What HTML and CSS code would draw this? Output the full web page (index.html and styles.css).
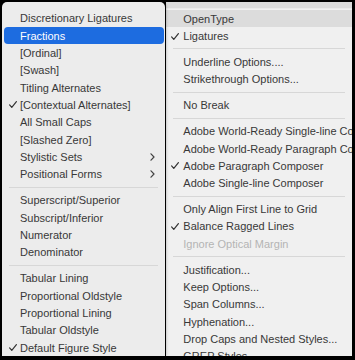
FILE: index.html
```html
<!DOCTYPE html>
<html>
<head>
<meta charset="utf-8">
<link rel="stylesheet" href="styles.css">
</head>
<body>
<div class="frame">
  <div class="menus">
    <div class="menu sub">
      <div class="item"><span class="chk"></span><span class="label">Discretionary Ligatures</span></div>
      <div class="item sel"><span class="chk"></span><span class="label">Fractions</span></div>
      <div class="item"><span class="chk"></span><span class="label">[Ordinal]</span></div>
      <div class="item"><span class="chk"></span><span class="label">[Swash]</span></div>
      <div class="item"><span class="chk"></span><span class="label">Titling Alternates</span></div>
      <div class="item"><span class="chk"><svg class="tick" viewBox="0 0 8 7"><path d="M0.6 3.9 L2.8 6.3 L7.4 0.6"/></svg></span><span class="label">[Contextual Alternates]</span></div>
      <div class="item"><span class="chk"></span><span class="label">All Small Caps</span></div>
      <div class="item"><span class="chk"></span><span class="label">[Slashed Zero]</span></div>
      <div class="item"><span class="chk"></span><span class="label">Stylistic Sets</span><svg class="arrow" viewBox="0 0 5 8"><path d="M1 0.8 L4 4 L1 7.2"/></svg></div>
      <div class="item"><span class="chk"></span><span class="label">Positional Forms</span><svg class="arrow" viewBox="0 0 5 8"><path d="M1 0.8 L4 4 L1 7.2"/></svg></div>
      <div class="sep"></div>
      <div class="item"><span class="chk"></span><span class="label">Superscript/Superior</span></div>
      <div class="item"><span class="chk"></span><span class="label">Subscript/Inferior</span></div>
      <div class="item"><span class="chk"></span><span class="label">Numerator</span></div>
      <div class="item"><span class="chk"></span><span class="label">Denominator</span></div>
      <div class="sep"></div>
      <div class="item"><span class="chk"></span><span class="label">Tabular Lining</span></div>
      <div class="item"><span class="chk"></span><span class="label">Proportional Oldstyle</span></div>
      <div class="item"><span class="chk"></span><span class="label">Proportional Lining</span></div>
      <div class="item"><span class="chk"></span><span class="label">Tabular Oldstyle</span></div>
      <div class="item"><span class="chk"><svg class="tick" viewBox="0 0 8 7"><path d="M0.6 3.9 L2.8 6.3 L7.4 0.6"/></svg></span><span class="label">Default Figure Style</span></div>
    </div>
    <div class="menu main">
      <div class="item hover"><span class="chk"></span><span class="label">OpenType</span></div>
      <div class="item"><span class="chk"><svg class="tick" viewBox="0 0 8 7"><path d="M0.6 3.9 L2.8 6.3 L7.4 0.6"/></svg></span><span class="label">Ligatures</span></div>
      <div class="sep"></div>
      <div class="item"><span class="chk"></span><span class="label">Underline Options....</span></div>
      <div class="item"><span class="chk"></span><span class="label">Strikethrough Options...</span></div>
      <div class="sep"></div>
      <div class="item"><span class="chk"></span><span class="label">No Break</span></div>
      <div class="sep"></div>
      <div class="item"><span class="chk"></span><span class="label">Adobe World-Ready Single-line Composer</span></div>
      <div class="item"><span class="chk"></span><span class="label">Adobe World-Ready Paragraph Composer</span></div>
      <div class="item"><span class="chk"><svg class="tick" viewBox="0 0 8 7"><path d="M0.6 3.9 L2.8 6.3 L7.4 0.6"/></svg></span><span class="label">Adobe Paragraph Composer</span></div>
      <div class="item"><span class="chk"></span><span class="label">Adobe Single-line Composer</span></div>
      <div class="sep"></div>
      <div class="item"><span class="chk"></span><span class="label">Only Align First Line to Grid</span></div>
      <div class="item"><span class="chk"><svg class="tick" viewBox="0 0 8 7"><path d="M0.6 3.9 L2.8 6.3 L7.4 0.6"/></svg></span><span class="label">Balance Ragged Lines</span></div>
      <div class="item disabled"><span class="chk"></span><span class="label">Ignore Optical Margin</span></div>
      <div class="sep"></div>
      <div class="item"><span class="chk"></span><span class="label">Justification...</span></div>
      <div class="item"><span class="chk"></span><span class="label">Keep Options...</span></div>
      <div class="item"><span class="chk"></span><span class="label">Span Columns...</span></div>
      <div class="item"><span class="chk"></span><span class="label">Hyphenation...</span></div>
      <div class="item"><span class="chk"></span><span class="label">Drop Caps and Nested Styles...</span></div>
      <div class="item"><span class="chk"></span><span class="label">GREP Styles...</span></div>
    </div>
  </div>
  <svg class="cursor" viewBox="0 0 10 14"><path d="M1 1 L1 11.5 L3.6 9 L5.6 13 L7.4 12.2 L5.5 8.3 L9 8.3 Z"/></svg>
</div>
</body>
</html>
```
FILE: styles.css
```css
html, body {
  margin: 0;
  padding: 0;
  background: #000;
}
body {
  width: 355px;
  height: 360px;
  overflow: hidden;
  font-family: "Liberation Sans", Arial, sans-serif;
  font-size: 11px;
  color: #383838;
}
.frame {
  position: relative;
  height: 360px;
  box-sizing: border-box;
  padding: 2px 3px 4px 2px;
}
.menus {
  display: flex;
  height: 100%;
  overflow: hidden;
}
.menu {
  overflow: hidden;
  box-sizing: border-box;
}
.sub {
  width: 163px;
  flex: none;
  background: #ececec;
  border-radius: 5px 5px 0 0;
  padding-top: 7.6px;
  position: relative;
  z-index: 2;
  box-shadow: 1px 0 3px rgba(0, 0, 0, 0.3);
}
.main {
  flex: 1;
  min-width: 0;
  background: #f0f0f0;
  margin-left: 1px;
  padding-top: 8px;
  box-shadow: inset 0 6px 0 #dadada, inset 0 7px 0 #e9e9e9;
}
.item {
  height: 17.35px;
  display: flex;
  align-items: center;
  white-space: nowrap;
}
.sub .item {
  margin: 0 1px 0 2px;
  padding: 0 9px 0 5px;
  border-radius: 4px;
}
.main .item {
  padding-left: 5px;
}
.chk {
  flex: none;
  width: 11px;
  display: flex;
  align-items: center;
}
.main .chk {
  width: 12.3px;
}
.label {
  flex: 1;
}
.tick {
  width: 8px;
  height: 7px;
  fill: none;
  stroke: #333;
  stroke-width: 1.2;
  stroke-linecap: round;
  stroke-linejoin: round;
}
.arrow {
  width: 5px;
  height: 8px;
  flex: none;
  fill: none;
  stroke: #444;
  stroke-width: 1.2;
  stroke-linecap: round;
  stroke-linejoin: round;
}
.sel {
  background: #1d6ce0;
  color: #fff;
}
.hover {
  background: #dcdcdc;
}
.disabled {
  color: #b4b4b4;
}
.sep {
  height: 1px;
  background: #d7d7d7;
  margin: 3.8px 7px;
}
.cursor {
  position: absolute;
  left: 79px;
  top: 54px;
  width: 10px;
  height: 14px;
  fill: #000;
  stroke: #fff;
  stroke-width: 0.9;
  stroke-linejoin: round;
}
```
